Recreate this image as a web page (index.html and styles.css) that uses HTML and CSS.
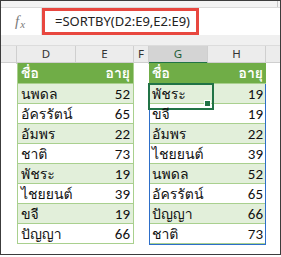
FILE: index.html
```html
<!DOCTYPE html>
<html lang="th">
<head>
<meta charset="utf-8">
<link rel="stylesheet" href="styles.css">
</head>
<body>
<div class="frame">
  <div class="topstrip"><span class="topdiv"></span></div>
  <div class="fbar">
    <div class="fx"><span class="fx-f">f</span><span class="fx-x">x</span></div>
    <div class="formula">=SORTBY(D2:E9,E2:E9)</div>
  </div>
  <div class="gap"></div>
  <div class="colheads">
    <div class="ch"></div>
    <div class="ch">D</div>
    <div class="ch">E</div>
    <div class="ch">F</div>
    <div class="ch sel">G</div>
    <div class="ch">H</div>
    <div class="ch last"></div>
  </div>
  <div class="sheet">
    <div class="spacer"></div>
    <div class="tbl">
      <div class="row head"><span class="name">ชื่อ</span><span class="num">อายุ</span></div>
      <div class="row band"><span class="name">นพดล</span><span class="num">52</span></div>
      <div class="row"><span class="name">อัครรัตน์</span><span class="num">65</span></div>
      <div class="row band"><span class="name">อัมพร</span><span class="num">22</span></div>
      <div class="row"><span class="name">ชาติ</span><span class="num">73</span></div>
      <div class="row band"><span class="name">พัชระ</span><span class="num">19</span></div>
      <div class="row"><span class="name">ไชยยนต์</span><span class="num">39</span></div>
      <div class="row band"><span class="name">ขจี</span><span class="num">19</span></div>
      <div class="row"><span class="name">ปัญญา</span><span class="num">66</span></div>
    </div>
    <div class="spacer"></div>
    <div class="tbl tbl-right">
      <div class="row head"><span class="name">ชื่อ</span><span class="num">อายุ</span></div>
      <div class="spill">
        <div class="row band"><span class="name active">พัชระ<i class="handle"></i></span><span class="num">19</span></div>
        <div class="row"><span class="name">ขจี</span><span class="num">19</span></div>
        <div class="row band"><span class="name">อัมพร</span><span class="num">22</span></div>
        <div class="row"><span class="name">ไชยยนต์</span><span class="num">39</span></div>
        <div class="row band"><span class="name">นพดล</span><span class="num">52</span></div>
        <div class="row"><span class="name">อัครรัตน์</span><span class="num">65</span></div>
        <div class="row band"><span class="name">ปัญญา</span><span class="num">66</span></div>
        <div class="row"><span class="name">ชาติ</span><span class="num">73</span></div>
      </div>
    </div>
    <div class="spacer"></div>
  </div>
</div>
</body>
</html>
```

FILE: styles.css
```css
* { box-sizing: border-box; }
html, body { margin: 0; padding: 0; background: #fff; }

.frame {
  width: 281px;
  height: 255px;
  border: 1px solid #3c3c3c;
  background: #fff;
  overflow: hidden;
  display: flex;
  flex-direction: column;
}

.topstrip {
  height: 7px;
  background: #f3f3f3;
  border-bottom: 1px solid #dadada;
  display: flex;
  justify-content: flex-end;
}
.topdiv {
  width: 3px;
  height: 6px;
  border-left: 1px solid #c8c8c8;
}

.fbar {
  height: 27px;
  display: flex;
  background: #fff;
}
.fx {
  width: 41px;
  border-right: 1px solid #e2e2e2;
  display: flex;
  align-items: center;
  justify-content: center;
  padding-right: 2px;
  font-family: "Liberation Serif", serif;
  font-style: italic;
  color: #7a7a7a;
}
.fx-f { font-size: 15px; }
.fx-x { font-size: 11px; margin-left: 1px; margin-top: 4px; }

.formula {
  width: 157px;
  height: 27px;
  border: 3px solid #e8473f;
  padding-left: 10px;
  font-family: "Noto Sans", sans-serif;
  font-size: 13px;
  line-height: 20px;
  color: #222;
  white-space: nowrap;
}

.gap {
  height: 10px;
  background: #f0f0f0;
}

.colheads {
  height: 18px;
  display: grid;
  grid-template-columns: 16px 59px 58px 15px 59px 58px 1fr;
  background: #ececec;
  border-top: 1px solid #dcdcdc;
  border-bottom: 1px solid #cfcfcf;
}
.ch {
  border-right: 1px solid #cfcfcf;
  font-family: "Noto Sans", sans-serif;
  font-size: 11.5px;
  line-height: 16px;
  text-align: center;
  color: #333;
}
.ch.last { border-right: none; }
.ch.sel {
  background: #d4d4d4;
  border-bottom: 2px solid #217346;
  color: #1f5e38;
}

.sheet {
  flex: 1;
  display: grid;
  grid-template-columns: 16px 117px 15px 117px 1fr;
}

.tbl {
  display: flex;
  flex-direction: column;
  border-left: 1px solid #a9d08e;
  border-right: 1px solid #a9d08e;
  align-self: start;
}
.tbl-right { border: none; }

.row {
  height: 20px;
  display: flex;
  align-items: center;
  justify-content: space-between;
  border-bottom: 1px solid #a9d08e;
  background: #fff;
  padding: 0 3px 0 3px;
  font-size: 14px;
  color: #111;
}
.row.band { background: #e2efda; }
.row.head {
  height: 21px;
  background: #70ad47;
  color: #fff;
  font-weight: bold;
  border-bottom: 1px solid #a9d08e;
}
.name {
  font-family: "Waree", Tahoma, "Loma", "Noto Sans Thai", "Leelawadee UI", sans-serif;
  position: relative;
  flex: 1;
  align-self: stretch;
  display: flex;
  align-items: center;
}
.num {
  font-family: "Carlito", "Lato", sans-serif;
  font-size: 15px;
}
.head .num { font-family: "Waree", Tahoma, "Loma", "Noto Sans Thai", sans-serif; font-size: 14px; }

.spill {
  border: 1px solid #2d6ec9;
  border-top: none;
}
.spill .row { padding-left: 2px; padding-right: 2px; }

.active::before {
  content: "";
  position: absolute;
  left: -4px;
  top: -1px;
  width: 62px;
  height: 23px;
  border: 2px solid #217346;
}
.handle {
  position: absolute;
  left: 52px;
  top: 16px;
  width: 7px;
  height: 7px;
  background: #217346;
  border: 1px solid #fff;
}
```
